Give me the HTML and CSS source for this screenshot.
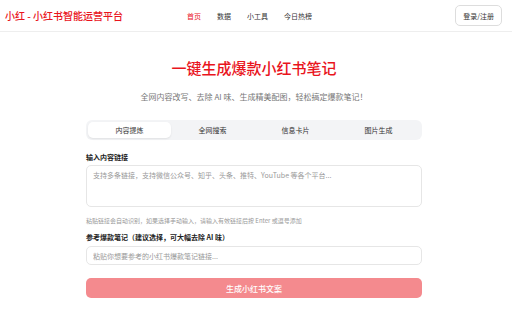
FILE: index.html
```html
<!DOCTYPE html>
<html lang="zh-CN">
<head>
    <meta charset="UTF-8">
    <meta name="viewport" content="width=device-width, initial-scale=1.0">
    <title>小红 - 小红书智能运营平台</title>
    <link rel="stylesheet" href="styles.css">
</head>
<body>
    <header class="header">
        <div class="logo">小红 - 小红书智能运营平台</div>
        <nav class="nav">
            <a class="nav-item active" href="#">首页</a>
            <a class="nav-item" href="#">数据</a>
            <a class="nav-item" href="#">小工具</a>
            <a class="nav-item" href="#">今日热榜</a>
        </nav>
        <button class="login-btn">登录/注册</button>
    </header>

    <main class="main">
        <h1 class="title">一键生成爆款小红书笔记</h1>
        <p class="subtitle">全网内容改写、去除 AI 味、生成精美配图，轻松搞定爆款笔记！</p>

        <div class="tabs">
            <div class="tab active">内容提炼</div>
            <div class="tab">全网搜索</div>
            <div class="tab">信息卡片</div>
            <div class="tab">图片生成</div>
        </div>

        <form class="form">
            <label class="field-label first" for="links">输入内容链接</label>
            <textarea id="links" class="text-area" placeholder="支持多条链接，支持微信公众号、知乎、头条、推特、YouTube 等各个平台..."></textarea>
            <p class="hint">粘贴链接会自动识别，如果选择手动输入，请输入有效链接后按 Enter 或逗号添加</p>

            <label class="field-label second" for="refNote">参考爆款笔记（建议选择，可大幅去除 AI 味）</label>
            <input id="refNote" class="text-input" type="text" placeholder="粘贴你想要参考的小红书爆款笔记链接...">

            <button type="button" class="submit-btn" disabled>生成小红书文案</button>
        </form>
    </main>
</body>
</html>
```

FILE: styles.css
```css
body {
    margin: 0;
    background-color: #fff;
    color: #333;
    font-family: "Noto Sans CJK SC", "Noto Sans", sans-serif;
}

.header {
    height: 32px;
    box-sizing: border-box;
    display: flex;
    align-items: center;
    padding: 0 10px 0 5px;
    border-bottom: 1px solid #eeeeee;
}

.logo {
    font-size: 10px;
    font-weight: 500;
    color: #e9141d;
    white-space: nowrap;
}

.nav {
    display: flex;
    gap: 16px;
    margin-left: 64px;
}

.nav-item {
    font-size: 7px;
    color: #333;
    text-decoration: none;
}

.nav-item.active {
    color: #e9141d;
}

.login-btn {
    margin-left: auto;
    height: 21px;
    padding: 0 7px;
    background-color: #fff;
    border: 1px solid #dddddd;
    border-radius: 5px;
    font-family: inherit;
    font-size: 7px;
    color: #333;
    cursor: pointer;
}

.main {
    width: 336px;
    margin: 0 auto;
    padding: 26px 4px 0 0; /* content sits a touch left of centre */
}

.title {
    margin: 0;
    font-size: 15px;
    line-height: 20px;
    font-weight: 500;
    color: #e9141d;
    text-align: center;
}

.subtitle {
    margin: 13px 0 0;
    font-size: 8px;
    line-height: 12px;
    color: #777;
    text-align: center;
}

.tabs {
    display: grid;
    grid-template-columns: repeat(4, 1fr);
    margin-top: 17px;
    padding: 2px;
    background-color: #f3f4f6;
    border-radius: 6px;
}

.tab {
    height: 16px;
    line-height: 16px;
    font-size: 7px;
    color: #333;
    text-align: center;
    border-radius: 5px;
}

.tab.active {
    background-color: #fff;
    box-shadow: 0 1px 2px rgba(0, 0, 0, 0.08);
}

.form {
    display: flex;
    flex-direction: column;
}

.field-label {
    font-size: 7px;
    line-height: 10px;
    font-weight: 700;
    color: #222;
}

.field-label.first {
    margin-top: 12px;
    margin-bottom: 3px;
}

.field-label.second {
    margin-top: 7px;
    margin-bottom: 4px;
}

.text-area,
.text-input {
    display: block;
    width: 100%;
    box-sizing: border-box;
    border: 1px solid #e6e6e6;
    border-radius: 5px;
    font-family: inherit;
    font-size: 7px;
    color: #333;
    outline: none;
}

.text-area {
    height: 42px;
    padding: 4px 6px;
    line-height: 10px;
    resize: none;
}

.text-input {
    height: 19px;
    padding: 0 6px;
}

.text-area::placeholder,
.text-input::placeholder {
    color: #999;
}

.hint {
    margin: 10px 0 0;
    font-size: 6px;
    line-height: 8px;
    color: #999;
}

.submit-btn {
    margin-top: 13px;
    height: 20px;
    border: none;
    border-radius: 5px;
    background-color: #f48a8e;
    color: #fff;
    font-family: inherit;
    font-size: 8px;
    font-weight: 500;
}
```
